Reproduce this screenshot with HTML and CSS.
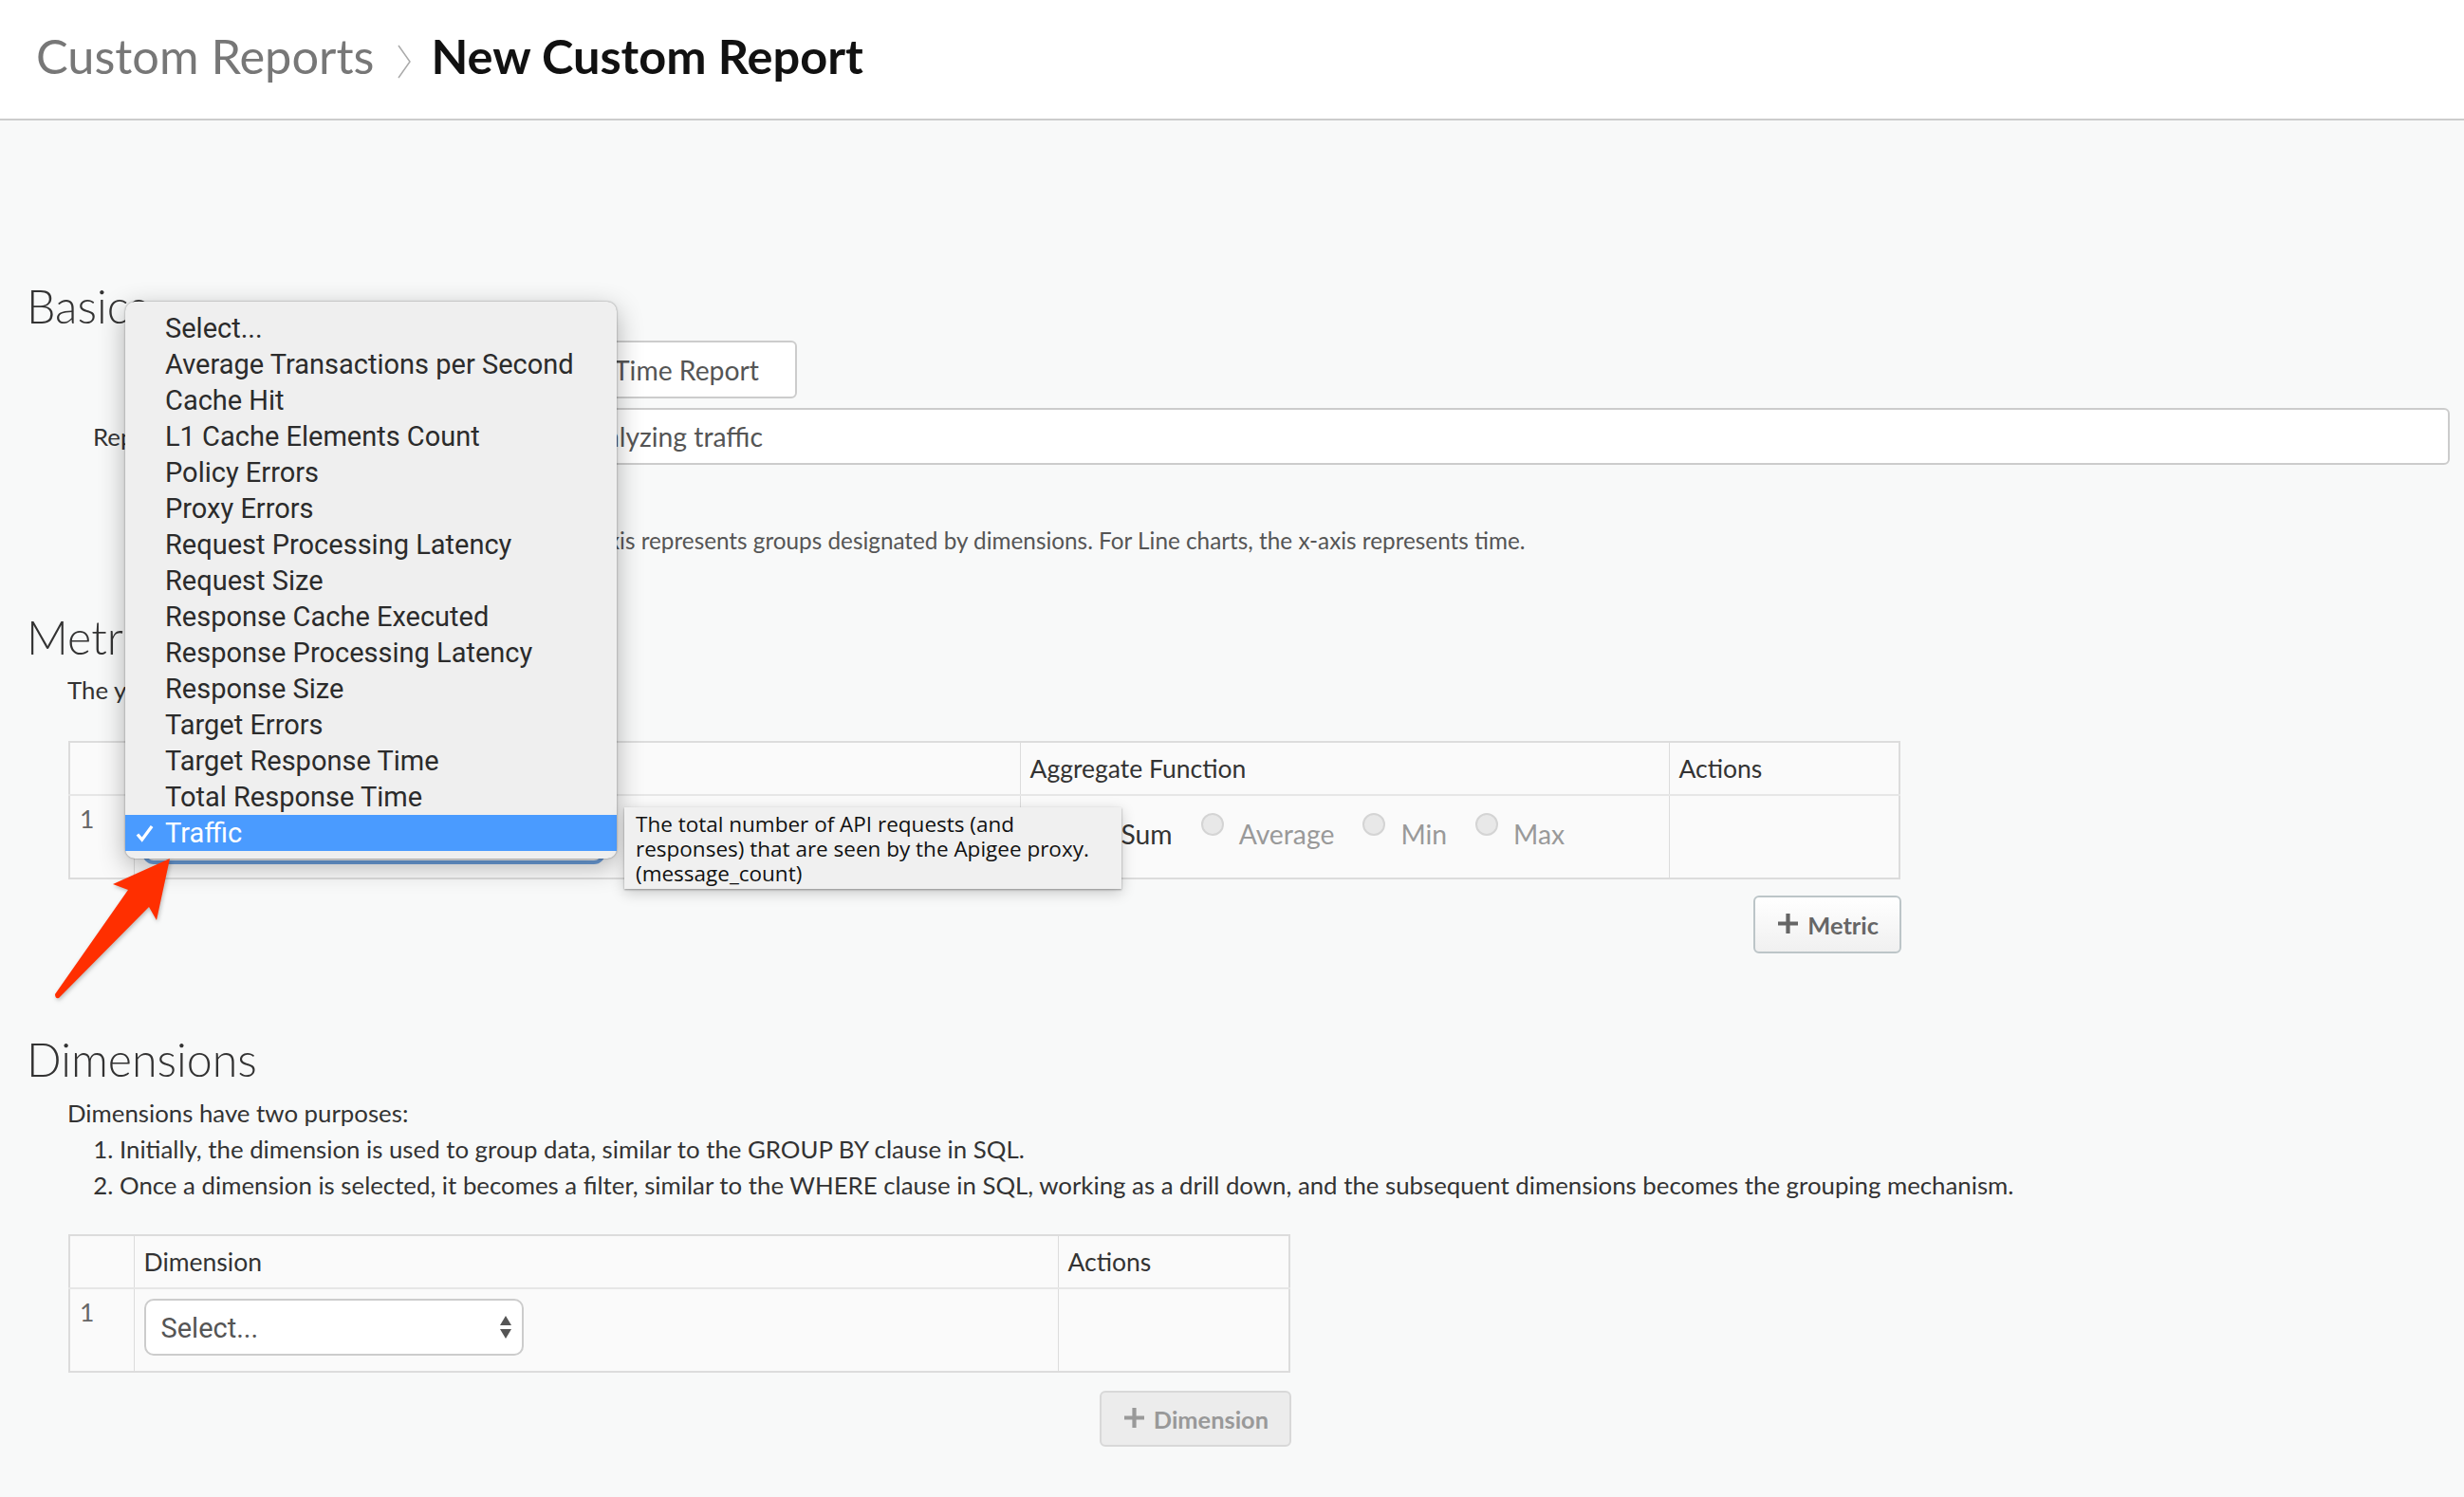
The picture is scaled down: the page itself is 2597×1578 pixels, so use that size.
FILE: index.html
```html
<!DOCTYPE html>
<html>
<head>
  <title>New Custom Report</title>
  <link rel="stylesheet" href="styles.css">
</head>
<body>
  <div class="page">
    <header class="page-header">
      <span class="crumb">Custom Reports</span>
      <svg class="crumb-chevron" viewBox="0 0 16 36"><polyline points="2,1 14,18 2,35"/></svg>
      <span class="crumb-current">New Custom Report</span>
    </header>

    <main class="page-main">
      <h2 class="section-title title-basics">Basics</h2>
      <div class="form-row type-row">
        <span class="form-label"></span>
        <button class="type-button">Time Report</button>
      </div>
      <div class="form-row name-row">
        <label class="form-label">Report Name</label>
        <input class="form-input" type="text" value="Report for analyzing traffic">
      </div>
      <p class="form-note">For Column charts, the x-axis represents groups designated by dimensions. For Line charts, the x-axis represents time.</p>

      <h2 class="section-title title-metrics">Metrics</h2>
      <p class="section-text">The y-axis represents metrics.</p>
      <table class="data-table metric-table">
        <tr>
          <th class="col-num"></th>
          <th class="col-metric">Metric</th>
          <th class="col-aggregate">Aggregate Function</th>
          <th>Actions</th>
        </tr>
        <tr>
          <td class="cell-num">1</td>
          <td><div class="select-box select-focused">Traffic</div></td>
          <td class="cell-radios">
            <div class="radio-group">
              <label class="radio-option"><span class="radio"></span>Sum</label>
              <label class="radio-option muted"><span class="radio"></span>Average</label>
              <label class="radio-option muted"><span class="radio"></span>Min</label>
              <label class="radio-option muted"><span class="radio"></span>Max</label>
            </div>
          </td>
          <td></td>
        </tr>
      </table>
      <div class="table-actions metric-actions">
        <button class="add-button">
          <svg class="plus-icon" viewBox="0 0 20 20"><path d="M8 0h4v8h8v4h-8v8H8v-8H0V8h8z"/></svg>
          Metric
        </button>
      </div>

      <h2 class="section-title title-dimensions">Dimensions</h2>
      <p class="section-text dimensions-text">Dimensions have two purposes:</p>
      <ol class="purpose-list">
        <li>Initially, the dimension is used to group data, similar to the GROUP BY clause in SQL.</li>
        <li>Once a dimension is selected, it becomes a filter, similar to the WHERE clause in SQL, working as a drill down, and the subsequent dimensions becomes the grouping mechanism.</li>
      </ol>
      <table class="data-table dimension-table">
        <tr>
          <th class="col-num"></th>
          <th class="col-dimension">Dimension</th>
          <th>Actions</th>
        </tr>
        <tr>
          <td class="cell-num">1</td>
          <td>
            <div class="select-box select-closed">
              Select...
              <svg class="select-caret" viewBox="0 0 14 24"><path d="M7 0l6 10H1zM7 24L1 14h12z"/></svg>
            </div>
          </td>
          <td></td>
        </tr>
      </table>
      <div class="table-actions dimension-actions">
        <button class="add-button add-disabled">
          <svg class="plus-icon" viewBox="0 0 20 20"><path d="M8 0h4v8h8v4h-8v8H8v-8H0V8h8z"/></svg>
          Dimension
        </button>
      </div>
    </main>

    <ul class="select-menu">
      <li>Select...</li>
      <li>Average Transactions per Second</li>
      <li>Cache Hit</li>
      <li>L1 Cache Elements Count</li>
      <li>Policy Errors</li>
      <li>Proxy Errors</li>
      <li>Request Processing Latency</li>
      <li>Request Size</li>
      <li>Response Cache Executed</li>
      <li>Response Processing Latency</li>
      <li>Response Size</li>
      <li>Target Errors</li>
      <li>Target Response Time</li>
      <li>Total Response Time</li>
      <li class="menu-selected">
        <svg class="menu-check" viewBox="0 0 20 20"><path d="M2 11l5 6L18 2"/></svg>
        Traffic
      </li>
    </ul>

    <div class="tooltip">The total number of API requests (and responses) that are seen by the Apigee proxy. (message_count)</div>

    <svg class="red-arrow" viewBox="0 0 140 165">
      <path d="M129 10L69 37L85 43L8 153Q8 158 12 157L107 61L115 75Z"/>
    </svg>
  </div>
</body>
</html>
```

FILE: styles.css
```css
body {
  margin: 0;
  background-color: #f8f9f9;
  color: #333;
  font-family: "Lato", sans-serif;
  font-size: 25.8px;
}

.page {
  position: relative;
  width: 2597px;
  min-height: 1578px;
  overflow: hidden;
}

/* Header */
.page-header {
  display: flex;
  align-items: center;
  height: 117px;
  padding: 0 0 8px 38px;
  background-color: white;
  border-bottom: 2px solid #ccc;
}

.crumb {
  color: #777;
  font-size: 50.5px;
}

.crumb-chevron {
  width: 16px;
  height: 36px;
  margin: 12px 20px 0 24px;
  fill: none;
  stroke: #aaa;
  stroke-width: 1.5;
}

.crumb-current {
  color: #111;
  font-size: 50.5px;
  font-weight: 700;
}

/* Sections */
.page-main {
  padding-left: 29px;
}

.section-title {
  margin: 0 0 0 -1px;
  font-size: 48.3px;
  font-weight: 300;
  line-height: 60px;
}

.title-basics {
  margin-top: 165px;
}

.title-metrics {
  margin-top: 56px;
}

.title-dimensions {
  margin-top: 81px;
}

.section-text {
  margin: 8px 0 0 42px;
  line-height: 36px;
}

.dimensions-text {
  margin-top: 8px;
  line-height: 38px;
}

.purpose-list {
  margin: 0;
  padding-left: 97px;
  line-height: 38px;
}

/* Basics form */
.form-row {
  display: flex;
  align-items: center;
}

.type-row {
  height: 61px;
  margin-top: 7px;
}

.name-row {
  height: 60px;
  margin-top: 10px;
}

.form-label {
  width: 211px;
  padding-left: 69px;
  box-sizing: border-box;
  white-space: nowrap;
}

.type-button {
  height: 61px;
  margin-left: 369px;
  padding: 0 38px 0 36px;
  border: 2px solid #ccc;
  border-radius: 6px;
  background-color: white;
  color: #555;
  font-family: inherit;
  font-size: 28.3px;
}

.form-input {
  width: 2342px;
  height: 60px;
  box-sizing: border-box;
  padding: 0 0 0 233px;
  border: 2px solid #ccc;
  border-radius: 6px;
  background-color: white;
  color: #555;
  font-family: inherit;
  font-size: 28.3px;
}

.form-note {
  margin: 65px 0 0 331px;
  color: #555;
  font-size: 24.3px;
  line-height: 30px;
}

/* Tables */
.data-table {
  margin: 36px 0 0 43px;
  border-collapse: collapse;
  border: 2px solid #dcdcdc;
  background-color: #fafafa;
  table-layout: fixed;
}

.dimension-table {
  margin-top: 33px;
}

.metric-table {
  width: 1931px;
}

.dimension-table {
  width: 1288px;
}

.data-table th {
  box-sizing: border-box;
  height: 56px;
  padding: 0 10px;
  border: 1px solid #dcdcdc;
  border-bottom: 2px solid #e6e6e6;
  font-size: 26.5px;
  font-weight: 400;
  text-align: left;
}

.data-table td {
  box-sizing: border-box;
  height: 88px;
  padding: 0 10px;
  border: 1px solid #dcdcdc;
  vertical-align: top;
}

.col-num {
  width: 68px;
}

.col-metric {
  width: 934px;
}

.col-aggregate {
  width: 684px;
}

.col-dimension {
  width: 974px;
}

.data-table .cell-num {
  padding-top: 6px;
  color: #666;
  font-size: 26.5px;
  line-height: 36px;
}

.select-box {
  position: relative;
  height: 60px;
  box-sizing: border-box;
  margin-top: 10px;
  padding-left: 16px;
  border: 2px solid #ccc;
  border-radius: 10px;
  background-color: white;
  color: #555;
  font-family: "Roboto", sans-serif;
  font-size: 29px;
  line-height: 58px;
}

.select-focused {
  width: 484px;
  border-color: #6c9fdc;
  box-shadow: 0 0 0 2px #6c9fdc;
}

.select-closed {
  width: 400px;
}

.select-caret {
  position: absolute;
  top: 16px;
  right: 10px;
  width: 14px;
  height: 24px;
  fill: #555;
}

.radio-group {
  display: flex;
  gap: 30px;
  margin-left: 56px;
  padding-top: 22px;
  font-size: 28.3px;
  line-height: 36px;
}

.radio-option {
  display: flex;
  gap: 16px;
}

.radio-option.muted {
  color: #999;
}

.radio {
  width: 24px;
  height: 24px;
  box-sizing: border-box;
  margin-top: -4px;
  border: 2px solid #d4d4d4;
  border-radius: 50%;
  background-color: #e8e8e8;
}

/* Add buttons */
.table-actions {
  display: flex;
  justify-content: flex-end;
  margin-left: 43px;
}

.metric-actions {
  width: 1932px;
  margin-top: 17px;
}

.dimension-actions {
  width: 1289px;
  margin-top: 19px;
}

.add-button {
  display: flex;
  align-items: center;
  gap: 10px;
  height: 61px;
  padding: 0 22px 0 24px;
  border: 2px solid #bcc5c8;
  border-radius: 6px;
  background-color: #f3f3f3;
  background-image: linear-gradient(#fff, #f0f0f0);
  color: #666;
  font-family: inherit;
  font-size: 25.4px;
  font-weight: 700;
}

.add-disabled {
  height: 59px;
  border-color: #d8d8d8;
  background-image: none;
  background-color: #ececec;
  color: #999;
}

.plus-icon {
  width: 21px;
  height: 21px;
  margin-top: -3px;
  fill: currentColor;
}

/* Open select menu */
.select-menu {
  position: absolute;
  top: 318px;
  left: 132px;
  width: 518px;
  box-sizing: border-box;
  margin: 0;
  padding: 9px 0 8px;
  list-style: none;
  border-radius: 10px;
  background-color: #efefef;
  box-shadow: 0 0 2px rgba(0, 0, 0, 0.45), 0 8px 28px rgba(0, 0, 0, 0.3);
  color: #2b2b2b;
  font-family: "Roboto", sans-serif;
  font-size: 29px;
}

.select-menu li {
  position: relative;
  height: 38px;
  padding-left: 42px;
  line-height: 38px;
}

.select-menu .menu-selected {
  background-color: #4a9bff;
  color: white;
}

.menu-check {
  position: absolute;
  top: 10px;
  left: 11px;
  width: 19px;
  height: 19px;
  fill: none;
  stroke: white;
  stroke-width: 3.5;
}

.tooltip {
  position: absolute;
  top: 851px;
  left: 658px;
  width: 524px;
  height: 86px;
  box-sizing: border-box;
  padding: 5px 12px;
  background-color: #f0f0f0;
  box-shadow: 0 1px 2px rgba(0, 0, 0, 0.35), 0 4px 14px rgba(0, 0, 0, 0.2);
  color: #111;
  font-family: "Open Sans", sans-serif;
  font-size: 22.5px;
  line-height: 26px;
}

.red-arrow {
  position: absolute;
  top: 895px;
  left: 50px;
  width: 140px;
  height: 165px;
  fill: #ff2f00;
  filter: drop-shadow(1px 2px 2px rgba(0, 0, 0, 0.25));
}
```
